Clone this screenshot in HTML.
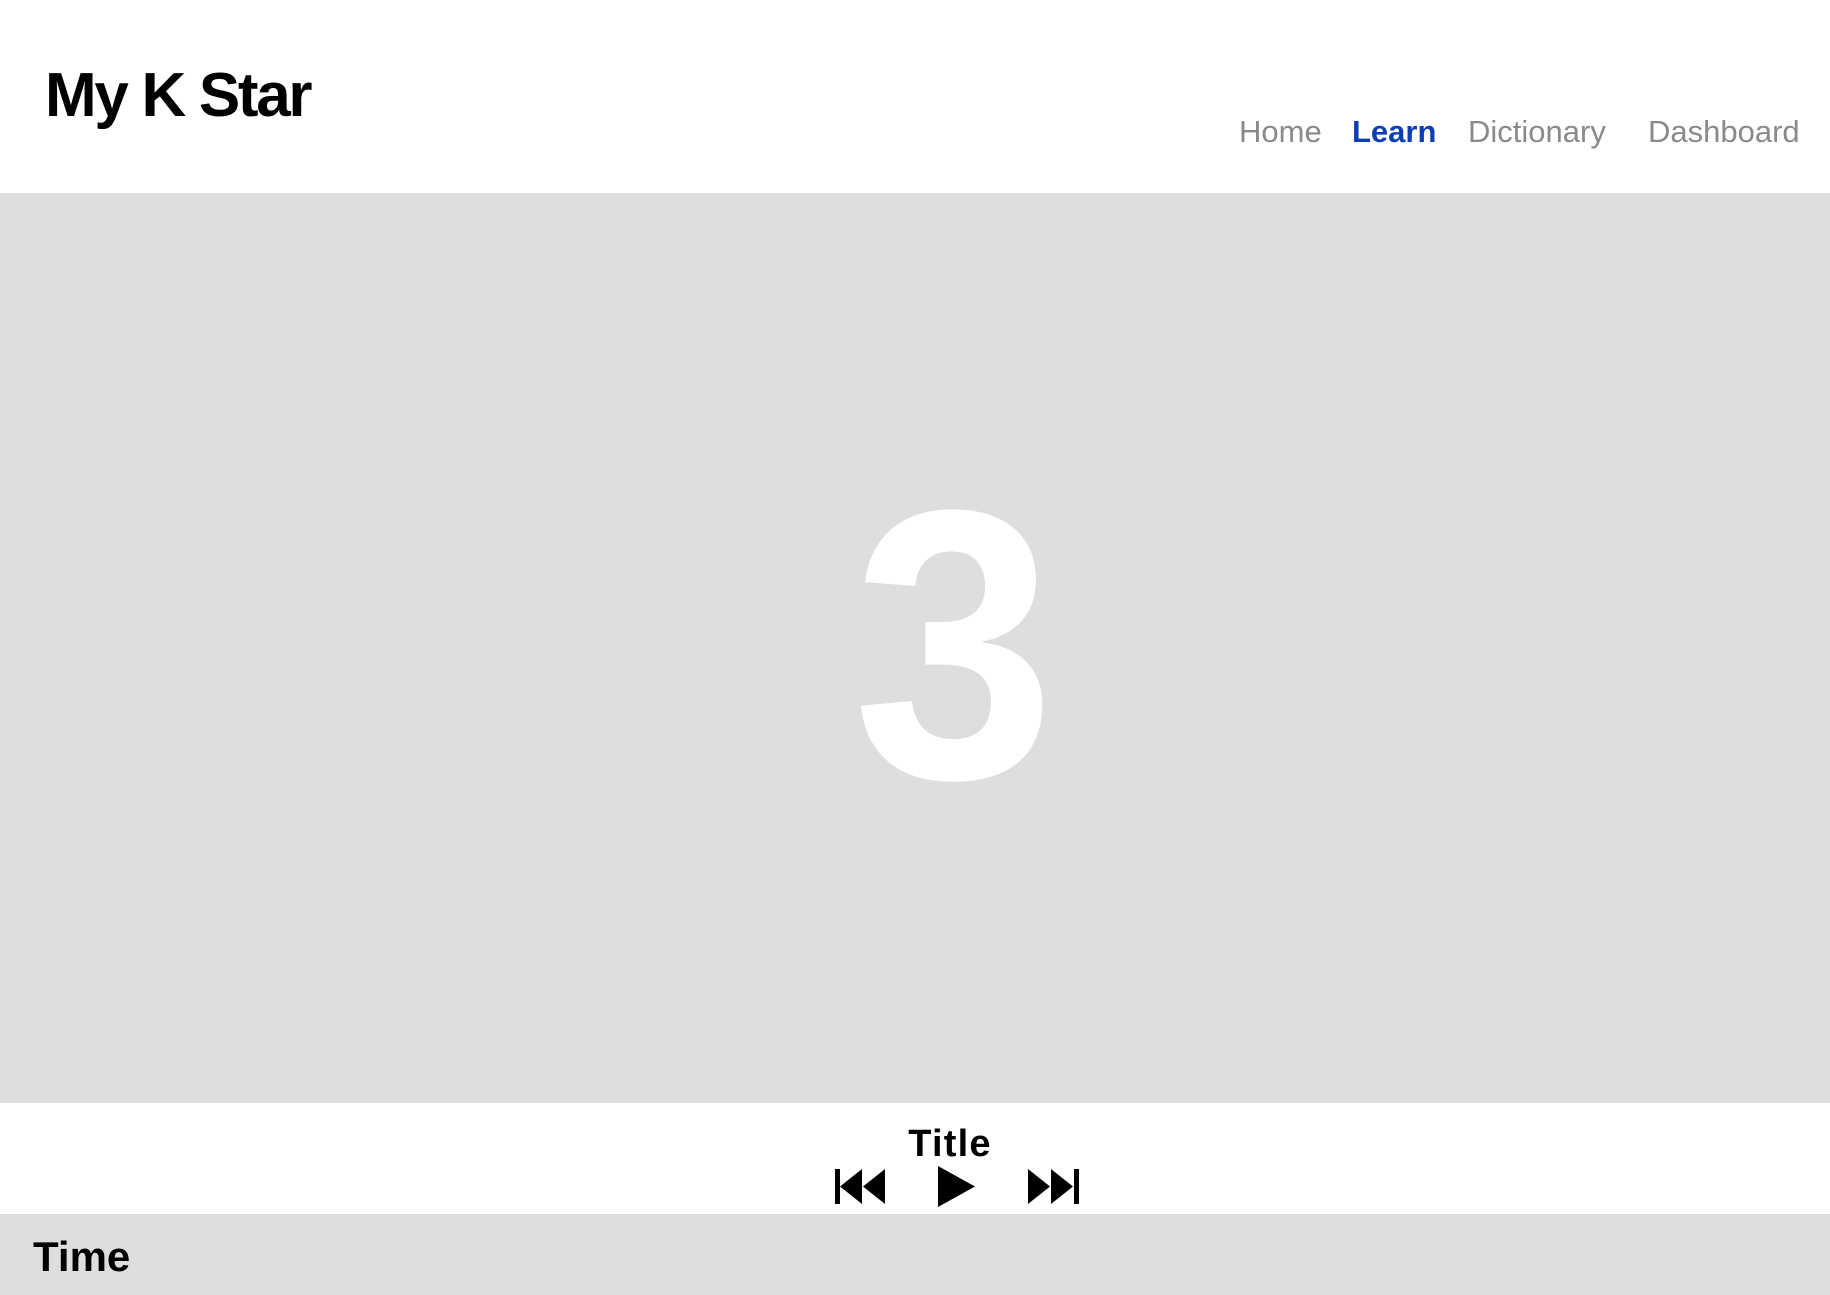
<!DOCTYPE html>
<html><head><meta charset="utf-8"><style>
*{margin:0;padding:0;box-sizing:border-box}
html,body{width:1830px;height:1295px;overflow:hidden;background:#fff;font-family:"Liberation Sans",sans-serif}
.a{position:absolute;line-height:1;white-space:nowrap}
.nav{font-size:31px;color:#8a8a8a;top:116px}
</style></head><body>
<div class="a" style="left:45px;top:65px;font-size:62px;font-weight:bold;color:#000;letter-spacing:-2.3px">My K Star</div>
<div class="a nav" style="left:1239px">Home</div>
<div class="a nav" style="left:1352px;color:#0b3fb3;font-weight:bold">Learn</div>
<div class="a nav" style="left:1468px">Dictionary</div>
<div class="a nav" style="left:1648px">Dashboard</div>
<div style="position:absolute;left:0;top:193px;width:1830px;height:910px;background:#dedede"></div>
<div class="a" style="left:0;width:1908px;text-align:center;top:456px;font-size:365px;font-weight:bold;color:#fff;transform:scaleY(1.052);transform-origin:50% 48px">3</div>
<div class="a" style="left:0;width:1900px;text-align:center;top:1125px;font-size:38px;font-weight:bold;color:#000;letter-spacing:1.2px">Title</div>
<svg style="position:absolute;left:830px;top:1160px" width="260" height="54" viewBox="830 1160 260 54">
<rect x="835" y="1169" width="5" height="35" fill="#000"/>
<polygon points="840,1186.5 862,1169 862,1204" fill="#000"/>
<polygon points="863,1186.5 885,1169 885,1204" fill="#000"/>
<polygon points="938,1166 975,1186.5 938,1207" fill="#000"/>
<polygon points="1028,1169 1050,1186.5 1028,1204" fill="#000"/>
<polygon points="1051,1169 1073,1186.5 1051,1204" fill="#000"/>
<rect x="1074" y="1169" width="5" height="35" fill="#000"/>
</svg>
<div style="position:absolute;left:0;top:1214px;width:1830px;height:81px;background:#dedede"></div>
<div class="a" style="left:33px;top:1236px;font-size:42px;font-weight:bold;color:#000">Time</div>
</body></html>
